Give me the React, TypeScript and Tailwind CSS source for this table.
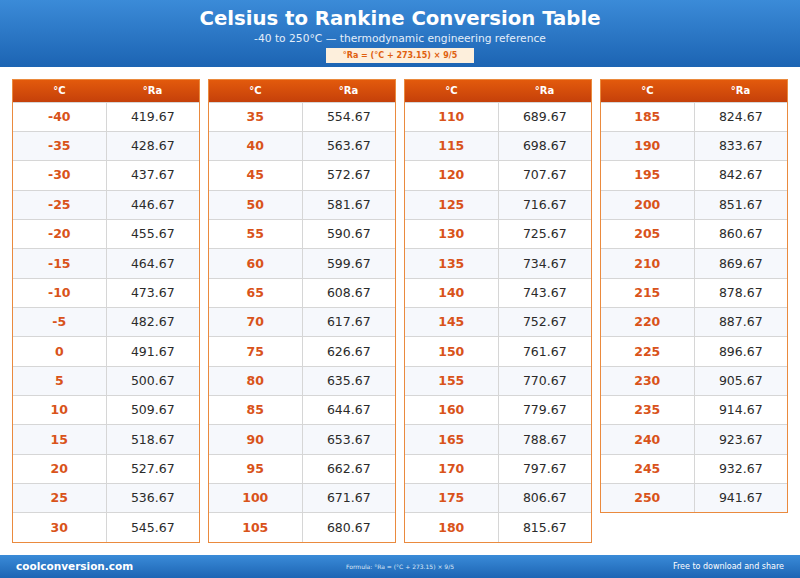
const columns: number[][] = [
  [-40, -35, -30, -25, -20, -15, -10, -5, 0, 5, 10, 15, 20, 25, 30],
  [35, 40, 45, 50, 55, 60, 65, 70, 75, 80, 85, 90, 95, 100, 105],
  [110, 115, 120, 125, 130, 135, 140, 145, 150, 155, 160, 165, 170, 175, 180],
  [185, 190, 195, 200, 205, 210, 215, 220, 225, 230, 235, 240, 245, 250],
];

const toRankine = (c: number) => ((c + 273.15) * 9) / 5;

function Table({ values }: { values: number[] }) {
  return (
    <div className="self-start border-[1.5px] border-[#ea8a3e] bg-white">
      <div className="flex h-[21.5px] bg-gradient-to-b from-[#e35a0c] to-[#c5400a] text-[10px] font-bold text-white">
        <div className="flex flex-1 items-center justify-center">°C</div>
        <div className="flex flex-1 items-center justify-center">°Ra</div>
      </div>
      {values.map((c, i) => (
        <div
          key={c}
          className={`flex h-[29.35px] border-t border-[#d6d6d6] ${i % 2 === 1 ? "bg-[#f6f8fc]" : "bg-white"}`}
        >
          <div className="flex flex-1 items-center justify-center border-r border-[#d6d6d6] pt-[1px] text-[12.5px] font-bold text-[#d9531a]">
            {c}
          </div>
          <div className="flex flex-1 items-center justify-center pt-[1px] text-[12.5px] text-[#2b2b2b]">
            {toRankine(c).toFixed(2)}
          </div>
        </div>
      ))}
    </div>
  );
}

export default function App() {
  return (
    <main className="flex h-[578px] w-[800px] flex-col bg-white font-['DejaVu_Sans',sans-serif]">
      <header className="flex h-[67px] flex-col items-center bg-gradient-to-b from-[#3b8bd8] to-[#1c64b3] pt-[7px] text-white">
        <h1 className="text-[19.7px] font-bold leading-[24px]">Celsius to Rankine Conversion Table</h1>
        <p className="mt-[1px] text-[10.7px] leading-[14px] text-[#e3eefa]">
          -40 to 250°C — thermodynamic engineering reference
        </p>
        <div className="mt-[2px] flex h-[15px] w-[148px] items-center justify-center bg-[#fdefdc] text-[8px] font-bold text-[#e0600f]">
          °Ra = (°C + 273.15) × 9/5
        </div>
      </header>

      <section className="grid flex-1 grid-cols-4 gap-[8px] px-[12px] pt-[12px]">
        {columns.map((vals, i) => (
          <Table key={i} values={vals} />
        ))}
      </section>

      <footer className="flex h-[23px] items-center justify-between bg-gradient-to-b from-[#3a8bd8] to-[#1d65b4] px-[16px] text-white">
        <span className="w-[200px] text-[10.5px] font-bold">coolconversion.com</span>
        <span className="text-[6px] text-[#dce8f6]">Formula: °Ra = (°C + 273.15) × 9/5</span>
        <span className="w-[200px] text-right text-[8px]">Free to download and share</span>
      </footer>
    </main>
  );
}
